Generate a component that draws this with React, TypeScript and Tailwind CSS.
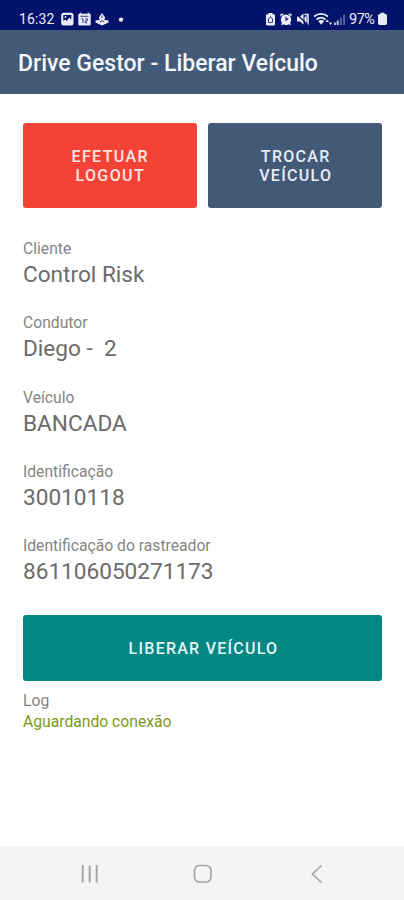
import React from 'react';

const fields = [
  { label: 'Cliente', value: 'Control Risk' },
  { label: 'Condutor', value: 'Diego -  2' },
  { label: 'Veículo', value: 'BANCADA' },
  { label: 'Identificação', value: '30010118' },
  { label: 'Identificação do rastreador', value: '861106050271173' },
];

function StatusBar() {
  return (
    <div className="flex h-[30px] items-end bg-[#03126b] pr-4 pb-1 pl-[19px] text-[#e9ecf8]">
      <span className="w-[42px] text-[14px] leading-[13px] tracking-[0.1px]">16:32</span>

      {/* Notifications */}
      <svg className="h-[14px] w-[64px]" viewBox="0 0 64 14" fill="currentColor">
        <rect x="0.2" y="0.8" width="12.3" height="12.7" rx="2.5" />
        <path d="M2.300 3h8v4.500L8.200 5.500 5.800 9 4.200 7.500 2.300 9z" fill="#03126b" />
        <circle cx="4.500" cy="5" r="1" />
        <path d="M18.800.8h1.500v1h6.400v-1h1.500v1h.8q.7 0 .7.700V12.300q0 1.200-1.200 1.200H18.500q-1.200 0-1.200-1.200V2.500q0-.7.700-.7h.8z" />
        <path d="M19.500 4.300h8M20.500 6.800h1.500v4.200M24.300 6.800h2v2h-2v2h2" fill="none" stroke="#03126b" strokeWidth="0.8" />
        <path d="M41 1l3.200 4.500-1 2.200 4.300.8v2L41 13.500l-6.500-3v-2l4.300-.8-1-2.200z" />
        <path d="M41 3.500v2.500M38.800 10l2.200-1.500 2.200 1.500" fill="none" stroke="#03126b" strokeWidth="0.8" />
        <circle cx="60" cy="7.600" r="2.200" />
      </svg>

      {/* System state */}
      <svg className="ml-auto h-[14px] w-[83px]" viewBox="0 0 83 14" fill="currentColor">
        <path d="M3.500 1h4v1.200h1.200q1.300 0 1.300 1.300V12q0 1.500-1.500 1.500h-6Q1 13.500 1 12V3.500q0-1.300 1.300-1.300h1.200z" />
        <path d="M5.500 4.500l2 2.500v3.500h-4V7z" fill="none" stroke="#03126b" strokeWidth="0.8" />
        <circle cx="21" cy="7.700" r="5.200" />
        <path d="M15.500 4.800V1.800h3.800zM26.500 4.800V1.800h-3.800zM16.500 11h3L16.500 13.700zM25.500 11h-3L25.500 13.700z" />
        <path d="M21 4.800v3.200l2.300-1.500" fill="none" stroke="#03126b" strokeWidth="1.100" />
        <path d="M32 4.500h3L38.500 1.500v11L35 9.500h-3z" />
        <path d="M39.500 2.500h3.500v10.500" fill="none" stroke="currentColor" strokeWidth="1.500" />
        <path d="M39.500 5v4.500l2.200 1.500V4z" />
        <path d="M31.500 2l11.500 11" stroke="#03126b" strokeWidth="1.100" />
        <path d="M49 4.500q7-5.200 14 0M51.500 7.500q4.500-3.700 9 0" fill="none" stroke="currentColor" strokeWidth="1.700" />
        <path d="M53.200 9q3-1.800 6 0l-3 3.700z" />
        <path d="M62.200 7.500l1.800 2.500h-3.600zM65.500 13l1.600-2.500h-3.200z" />
        <path d="M69 10.500h1.800V13H69zM71.700 8.500h2v4.500h-2z" opacity=".85" />
        <path d="M74.800 5.500h2.200V13h-2.200zM78 2.500h2.200V13H78z" opacity=".35" />
      </svg>
      <span className="ml-px w-[28px] text-[14.500px] leading-[13px] tracking-[-0.5px]">97%</span>
      <svg className="h-[14px] w-[11px]" viewBox="0 0 11 14" fill="currentColor">
        <path d="M3.500.8h4V2h.8q1.700 0 1.700 1.700v7.600q0 1.700-1.700 1.700H2.700Q1 13 1 11.300V3.700Q1 2 2.700 2h.8z" />
      </svg>
    </div>
  );
}

function NavigationBar() {
  return (
    <nav className="flex h-[54px] items-center bg-[#f4f4f4] text-[#a5a5a5]">
      <button className="ml-[80px] pt-px" aria-label="Recentes">
        <svg className="h-5 w-5" viewBox="0 0 20 20" fill="none" stroke="currentColor" strokeWidth="2">
          <path d="M2.700 1.200v17.300M9.700 1.200v17.300M16.700 1.200v17.300" />
        </svg>
      </button>
      <button className="ml-[93px] pt-px" aria-label="Início">
        <svg className="h-5 w-5" viewBox="0 0 20 20" fill="none" stroke="currentColor" strokeWidth="1.700">
          <rect x="1.500" y="1.500" width="16.500" height="16.500" rx="5" />
        </svg>
      </button>
      <button className="ml-[94px] pt-px" aria-label="Voltar">
        <svg className="h-5 w-5" viewBox="0 0 20 20" fill="none" stroke="currentColor" strokeWidth="1.700">
          <path d="M14.500 1.500l-9 8.500 9 8.500" />
        </svg>
      </button>
    </nav>
  );
}

export default function App() {
  return (
    <div className="flex h-[900px] w-[404px] flex-col overflow-hidden bg-white font-[Roboto,sans-serif]">
      <StatusBar />

      <header className="flex h-[64px] items-center bg-[#425a77] pt-[4px] pl-[18px]">
        <h1 className="text-[23px] font-medium whitespace-nowrap text-[#f3f6fa]">Drive Gestor - Liberar Veículo</h1>
      </header>

      <main className="flex flex-1 flex-col pt-[29px] pr-[22px] pl-[23px]">
        {/* Session actions */}
        <div className="flex gap-[11px]">
          <button className="h-[85px] flex-1 rounded-[3px] bg-[#f44336] pt-[2px] pl-px text-[16px] leading-[18.5px] font-medium tracking-[1.4px] text-[#fbe6e2]">
            EFETUAR
            <br />
            LOGOUT
          </button>
          <button className="h-[85px] flex-1 rounded-[3px] bg-[#425a77] pt-[2px] pl-[2px] text-[16px] leading-[18.5px] font-medium tracking-[1.3px] text-[#e6edf5]">
            TROCAR
            <br />
            VEÍCULO
          </button>
        </div>

        <dl className="mt-[30px] flex flex-col gap-[22.3px]">
          {fields.map((field) => (
            <div key={field.label} className="h-[52px]">
              <dt className="text-[15.7px] leading-[22px] text-[#858585]">{field.label}</dt>
              <dd className="text-[22.6px] leading-[29px] whitespace-pre text-[#6b6b6b]">{field.value}</dd>
            </div>
          ))}
        </dl>

        <button className="mt-[28px] h-[66px] shrink-0 rounded-[3px] bg-[#028784] pt-px pl-[2px] text-[16px] font-medium tracking-[1.25px] text-[#e3f5f4]">
          LIBERAR VEÍCULO
        </button>

        <div className="mt-[9px] text-[15.7px] leading-[21px]">
          <p className="text-[#858585]">Log</p>
          <p className="text-[#7c9a1c]">Aguardando conexão</p>
        </div>
      </main>

      <NavigationBar />
    </div>
  );
}
